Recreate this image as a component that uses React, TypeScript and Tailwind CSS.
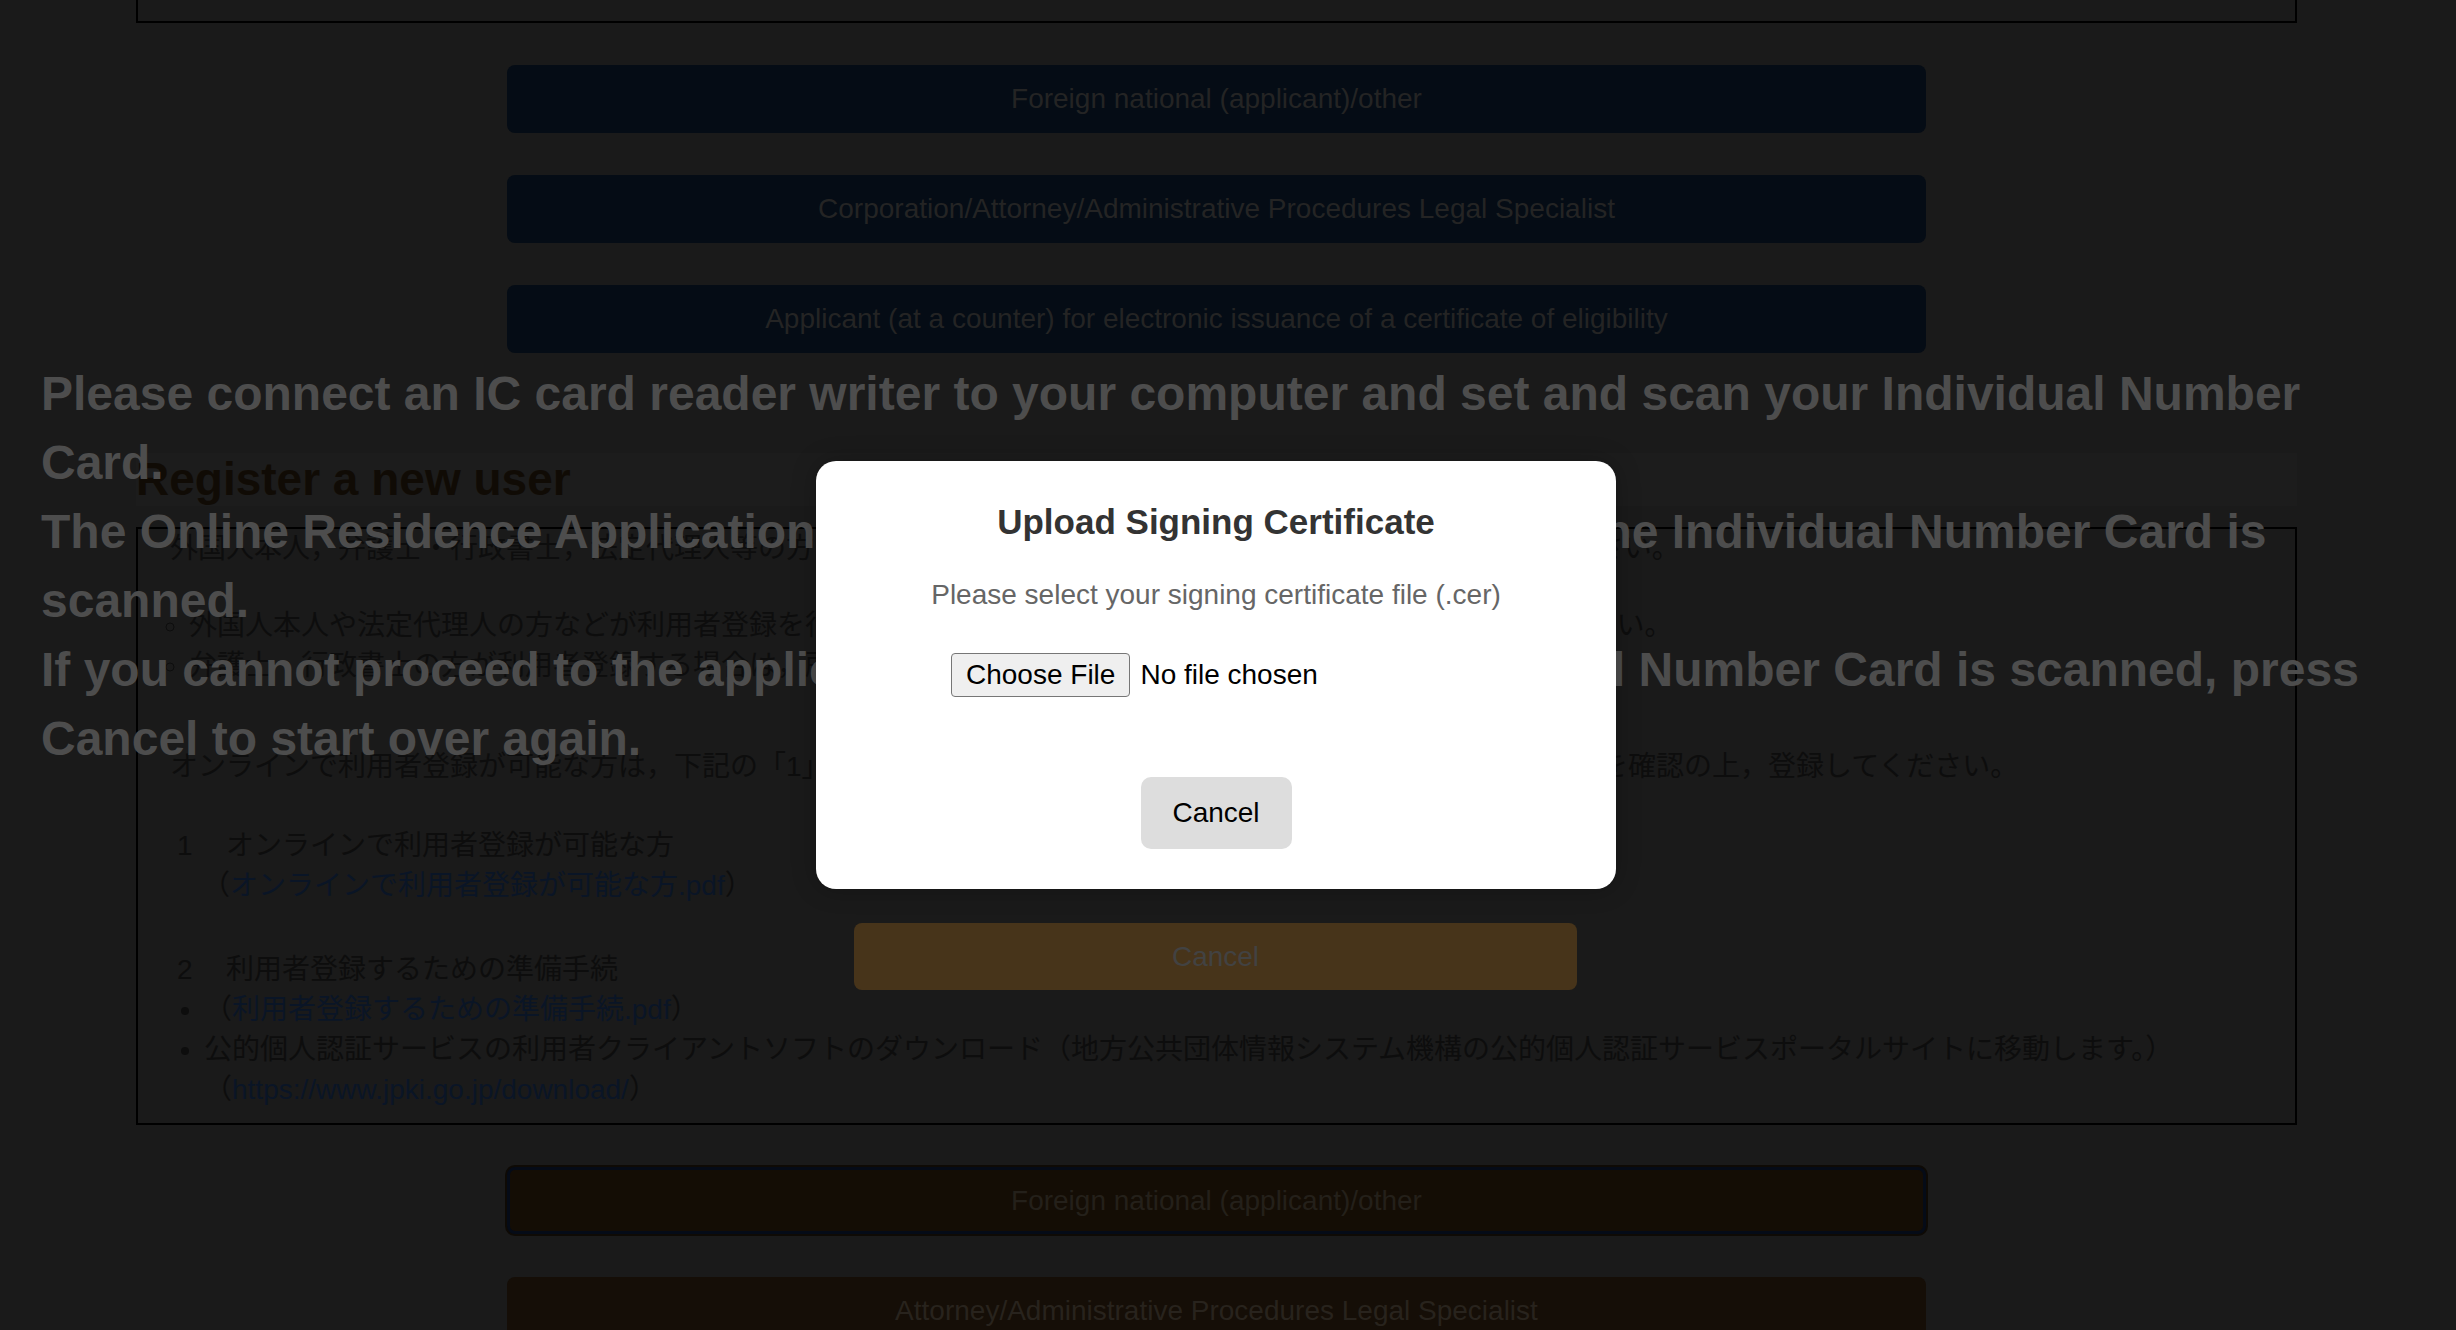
const sans = "font-['Liberation_Sans','Noto_Sans_CJK_JP',sans-serif]"

const topButtons = [
  'Foreign national (applicant)/other',
  'Corporation/Attorney/Administrative Procedures Legal Specialist',
  'Applicant (at a counter) for electronic issuance of a certificate of eligibility',
]

function RegisterBox() {
  return (
    <div className="mt-[21px] border-2 border-black pb-[13px] pl-[32px] text-[28px] leading-[40px] text-[#0d0d0d]">
      <p className="whitespace-nowrap">
        外国人本人，弁護士・行政書士，法定代理人等の方は，必ず以下の各事項をご確認の上，利用者登録を行ってください。
      </p>
      <ul className="mt-[37px] list-[circle] pl-[19px] whitespace-nowrap">
        <li>外国人本人や法定代理人の方などが利用者登録を行う場合は，必ずマイナンバーカードと暗証番号をご用意ください。</li>
        <li>弁護士・行政書士の方が利用者登録する場合は，所属団体等の情報が必要です。</li>
      </ul>
      <p className="mt-[61px] whitespace-nowrap">
        オンラインで利用者登録が可能な方は，下記の「1」及び「2」の内容をご覧いただき，ご自身が対象者であることを確認の上，登録してください。
      </p>

      <div className="mt-[39px]">
        <div className="flex">
          <span className="w-[56px] pl-[7px]">1</span>
          <span>オンラインで利用者登録が可能な方</span>
        </div>
        <div className="pl-[32px]">
          （<a className="text-[#0a1526]">オンラインで利用者登録が可能な方.pdf</a>）
        </div>
      </div>

      <div className="mt-[44px]">
        <div className="flex">
          <span className="w-[56px] pl-[7px]">2</span>
          <span>利用者登録するための準備手続</span>
        </div>
        <ul className="list-disc pl-[34px]">
          <li>
            （<a className="text-[#0a1526]">利用者登録するための準備手続.pdf</a>）
          </li>
          <li className="whitespace-nowrap">
            公的個人認証サービスの利用者クライアントソフトのダウンロード（地方公共団体情報システム機構の公的個人認証サービスポータルサイトに移動します。）
            <br />
            （<a className="text-[#0a1526]">https://www.jpki.go.jp/download/</a>）
          </li>
        </ul>
      </div>
    </div>
  )
}

function CertificateModal() {
  return (
    <div className="absolute left-[816px] top-[461px] w-[800px] rounded-[20px] bg-white px-[40px] py-[40px] text-center shadow-[0_0_24px_rgba(0,0,0,0.25)]">
      <h3 className="text-[35px] font-bold leading-[42px] text-[#333333]">Upload Signing Certificate</h3>
      <p className="mt-[35px] text-[28px] leading-[34px] text-[#666666]">
        Please select your signing certificate file (.cer)
      </p>
      <input
        type="file"
        accept=".cer"
        className="mx-auto mt-[41px] block h-[44px] w-[530px] text-left text-[28px] text-black file:mr-[10px] file:h-[44px] file:rounded-[4px] file:border file:border-[#767676] file:bg-[#efefef] file:px-[14px] file:text-[28px] file:text-black"
      />
      <button className="mx-auto mt-[80px] block h-[72px] w-[151px] rounded-[10px] bg-[#dddddd] text-[28px] text-black">
        Cancel
      </button>
    </div>
  )
}

export default function App() {
  return (
    <div className={`relative h-[1330px] w-full overflow-hidden bg-[#1a1a1a] ${sans}`}>
      {/* page underneath the overlay */}
      <div className="ml-[136px] w-[2161px]">
        <div className="h-[23px] border-2 border-t-0 border-black" />

        <div className="mx-auto mt-[42px] flex w-[1419px] flex-col gap-[42px]">
          {topButtons.map((label) => (
            <button
              key={label}
              className="h-[68px] rounded-[8px] bg-[#050c15] text-[28px] text-[#242424]"
            >
              {label}
            </button>
          ))}
        </div>

        <h2 className="mt-[100px] h-[53px] bg-[#1c1c1c] text-[46px] font-bold leading-[53px] text-[#100b05]">
          Register a new user
        </h2>

        <RegisterBox />

        <div className="mx-auto mt-[42px] flex w-[1419px] flex-col gap-[43px]">
          <button className="h-[67px] rounded-[8px] border-[3px] border-[#050b17] bg-[#140d05] text-[28px] text-[#24201a] ring-2 ring-[#0e0a05]">
            Foreign national (applicant)/other
          </button>
          <button className="h-[67px] rounded-[8px] bg-[#150e07] text-[28px] text-[#28231d]">
            Attorney/Administrative Procedures Legal Specialist
          </button>
        </div>
      </div>

      {/* overlay message */}
      <div className="absolute left-[41px] right-[41px] top-[359px] text-[48px] font-bold leading-[69px] text-[#4d4d4d]">
        Please connect an IC card reader writer to your computer and set and scan your Individual Number Card.
        <br />
        The Online Residence Application System screens will appear after the Individual Number Card is scanned.
        <br />
        If you cannot proceed to the application screens once your Individual Number Card is scanned, press Cancel to start over again.
      </div>

      <button className="absolute left-[854px] top-[923px] h-[67px] w-[723px] rounded-[8px] bg-[#47341a] text-[28px] text-[#424242]">
        Cancel
      </button>

      <CertificateModal />
    </div>
  )
}
